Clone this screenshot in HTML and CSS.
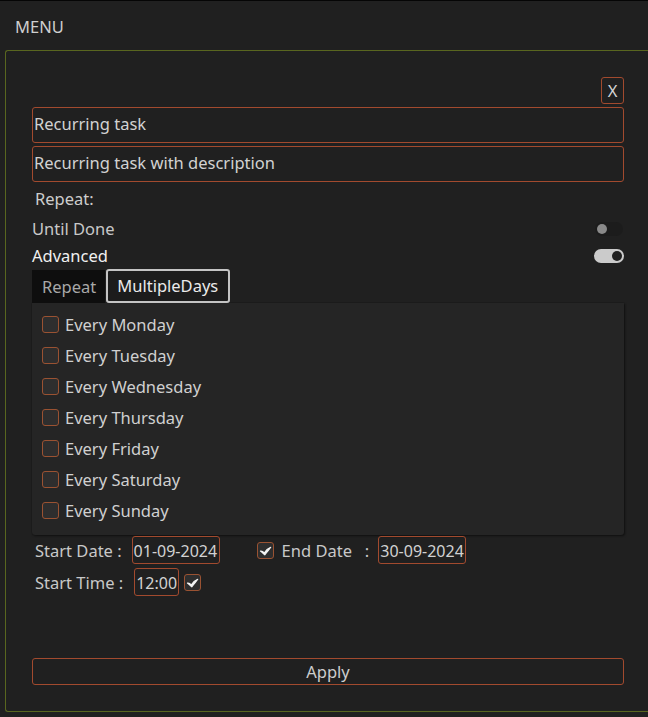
FILE: index.html
```html
<!DOCTYPE html>
<html>
<head>
<meta charset="utf-8">
<link rel="stylesheet" href="styles.css">
</head>
<body>
<div class="topline"></div>
<div class="title">MENU</div>
<div class="panel">
  <div class="close-row"><button class="close">X</button></div>
  <div class="field">Recurring task</div>
  <div class="field">Recurring task with description</div>
  <div class="label repeat-label">Repeat:</div>
  <div class="toggle-row">
    <span class="dim">Until Done</span>
    <span class="switch off"><span class="knob"></span></span>
  </div>
  <div class="toggle-row adv">
    <span class="bright">Advanced</span>
    <span class="switch on"><span class="knob"></span></span>
  </div>
  <div class="tabs">
    <div class="tab">Repeat</div>
    <div class="tab active">MultipleDays</div>
  </div>
  <div class="tab-panel">
    <div class="day"><span class="cb"></span>Every Monday</div>
    <div class="day"><span class="cb"></span>Every Tuesday</div>
    <div class="day"><span class="cb"></span>Every Wednesday</div>
    <div class="day"><span class="cb"></span>Every Thursday</div>
    <div class="day"><span class="cb"></span>Every Friday</div>
    <div class="day"><span class="cb"></span>Every Saturday</div>
    <div class="day"><span class="cb"></span>Every Sunday</div>
  </div>
  <div class="date-row">
    <span class="lbl start-lbl">Start Date :</span>
    <span class="box date">01-09-2024</span>
    <span class="cb checked"><svg viewBox="0 0 16 16" width="15" height="15"><path d="M2.6 8.6 C4.2 8.3 5.6 9.3 6.6 10.6 C8.6 7.6 10.8 5.6 13.6 4.6 C12.4 6.6 9.6 9.2 7.2 12.6 C6 11.6 4.6 10.2 2.6 8.6 Z" fill="#f4f4f4" stroke="#f4f4f4" stroke-width="1.2" stroke-linejoin="round"/></svg></span>
    <span class="lbl end-lbl">End Date&nbsp;&nbsp;&nbsp;:</span>
    <span class="box date">30-09-2024</span>
  </div>
  <div class="time-row">
    <span class="lbl time-lbl">Start Time :</span>
    <span class="box time">12:00</span>
    <span class="cb checked small"><svg viewBox="0 0 16 16" width="15" height="15"><path d="M2.6 8.6 C4.2 8.3 5.6 9.3 6.6 10.6 C8.6 7.6 10.8 5.6 13.6 4.6 C12.4 6.6 9.6 9.2 7.2 12.6 C6 11.6 4.6 10.2 2.6 8.6 Z" fill="#f4f4f4" stroke="#f4f4f4" stroke-width="1.2" stroke-linejoin="round"/></svg></span>
  </div>
  <button class="apply">Apply</button>
</div>
</body>
</html>
```
FILE: styles.css
```css
html, body {
  margin: 0;
  padding: 0;
  background: #202020;
  height: 717px;
  overflow: hidden;
}
body {
  font-family: "Noto Sans", "Open Sans", sans-serif;
  font-size: 16.5px;
  color: #c8c8c8;
  position: relative;
}
.topline {
  height: 1px;
  background: #050505;
}
.title {
  padding: 15px 0 0 15px;
  height: 34px;
  box-sizing: border-box;
  line-height: 22px;
  color: #cfcfcf;
}
.panel {
  margin-left: 5px;
  margin-top: 15px;
  height: 662px;
  border: 1px solid #59661f;
  border-right: none;
  border-radius: 3px 0 0 3px;
  box-sizing: border-box;
  padding: 26px 24px 0 26px;
}
.close-row {
  display: flex;
  justify-content: flex-end;
}
.close {
  width: 23px;
  height: 27px;
  background: #202020;
  border: 1px solid #a24a2e;
  border-radius: 3px;
  color: #d4d4d4;
  font-family: "Noto Sans", sans-serif;
  font-size: 16.5px;
  padding: 0;
  line-height: 24px;
}
.field {
  height: 36px;
  border: 1px solid #a24a2e;
  border-radius: 3px;
  box-sizing: border-box;
  padding-left: 1px;
  line-height: 32px;
  margin-top: 3px;
  color: #d2d2d2;
}
.repeat-label {
  margin-top: 5px;
  padding-left: 3px;
  line-height: 24px;
  color: #cdcdcd;
}
.toggle-row {
  display: flex;
  justify-content: space-between;
  align-items: center;
  height: 27px;
  margin-top: 4px;
}
.toggle-row.adv { margin-top: 0; }
.dim { color: #c8c8c8; }
.bright { color: #f0f0f0; }
.switch {
  position: relative;
  width: 30px;
  height: 14px;
  border-radius: 7px;
}
.switch.off { background: #1c1c1c; width: 28px; margin-right: 1px; }
.switch.off .knob {
  position: absolute;
  left: 2px;
  top: 2px;
  width: 10px;
  height: 10px;
  border-radius: 50%;
  background: #8a8a8a;
}
.switch.on { background: #cbcbcb; }
.switch.on .knob {
  position: absolute;
  right: 2px;
  top: 2px;
  width: 10px;
  height: 10px;
  border-radius: 50%;
  background: #202020;
}
.tabs {
  display: flex;
  height: 34px;
}
.tab {
  background: #0e0e0e;
  color: #a8a8a8;
  padding: 0 9px 0 10px;
  line-height: 34px;
  height: 33px;
  margin-top: 1px;
}
.tab.active {
  background: #1c1c1c;
  color: #eaeaea;
  border: 2px solid #c4c4c4;
  border-radius: 3px;
  padding: 0 10px 0 9px;
  line-height: 30px;
  height: 34px;
  box-sizing: border-box;
  margin-top: 0;
  margin-left: 1px;
}
.tab-panel {
  background: #252525;
  border-radius: 0 0 3px 3px;
  box-shadow: 1px 1px 2px #111, 0 0 1px #111;
  height: 232px;
  padding-top: 6px;
  box-sizing: border-box;
}
.day {
  display: flex;
  align-items: center;
  height: 31px;
  padding-left: 10px;
  color: #d0d0d0;
}
.cb {
  display: inline-flex;
  align-items: center;
  justify-content: center;
  width: 17px;
  height: 17px;
  box-sizing: border-box;
  border: 1px solid #9a5232;
  border-radius: 3px;
  background: #2e2e2e;
  margin-right: 6px;
  flex: none;
}
.date-row, .time-row {
  display: flex;
  align-items: center;
  height: 30px;
  white-space: nowrap;
}
.date-row { margin-top: 0; }
.time-row { margin-top: 2px; }
.lbl { color: #c8c8c8; }
.start-lbl { margin-left: 3px; margin-right: 10px; }
.box {
  border: 1px solid #a24a2e;
  border-radius: 3px;
  height: 28px;
  box-sizing: border-box;
  line-height: 28px;
  padding: 0 0 0 1px;
  color: #d2d2d2;
  white-space: nowrap;
  flex: none;
  font-size: 16px;
}
.date { width: 88px; }
.date-row .cb { margin-left: 37px; margin-right: 8px; }
.end-lbl { margin-right: 9px; }
.time-lbl { margin-left: 3px; margin-right: 11px; }
.time { width: 45px; }
.time-row .cb { margin-left: 5px; }
.apply {
  display: block;
  width: 100%;
  margin-top: 61px;
  height: 27px;
  background: #202020;
  border: 1px solid #a24a2e;
  border-radius: 3px;
  color: #cdcdcd;
  font-family: "Noto Sans", sans-serif;
  font-size: 16.5px;
  line-height: 24px;
  padding: 0;
}
```
